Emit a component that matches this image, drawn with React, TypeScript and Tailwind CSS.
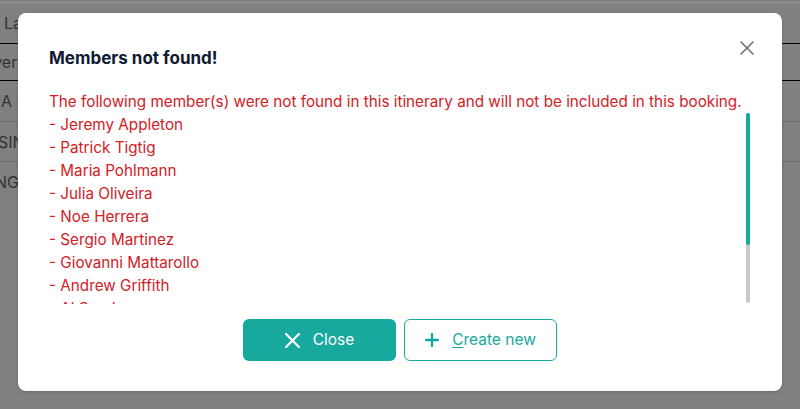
import React from 'react'

const missingMembers = [
  'Jeremy Appleton',
  'Patrick Tigtig',
  'Maria Pohlmann',
  'Julia Oliveira',
  'Noe Herrera',
  'Sergio Martinez',
  'Giovanni Mattarollo',
  'Andrew Griffith',
  'Al Sanders',
  'Kate Mueller',
]

// rows of the table that sits behind the overlay
const bgRows = [
  { text: 'Last name', h: 'h-[41px]', line: 'border-black', offset: 'ml-[4px]' },
  { text: 'Rivera', h: 'h-[37px]', line: 'border-black', offset: 'ml-[-21px]' },
  { text: 'ANA HILL', h: 'h-[41px]', line: 'border-[#6c6c6c]', offset: 'ml-[-22px]' },
  { text: 'SINGH', h: 'h-[40px]', line: 'border-[#6c6c6c]', offset: 'ml-[-2px]' },
  { text: 'NG', h: 'h-[40px]', line: 'border-transparent', offset: 'ml-[-5px]' },
]

function XIcon({ className, size = 14, stroke = 1.6 }: { className?: string; size?: number; stroke?: number }) {
  return (
    <svg width={size} height={size} viewBox="0 0 14 14" fill="none" className={className}>
      <path d="M1 1L13 13M13 1L1 13" stroke="currentColor" strokeWidth={stroke} strokeLinecap="round" />
    </svg>
  )
}

function PlusIcon({ className }: { className?: string }) {
  return (
    <svg width="14" height="14" viewBox="0 0 14 14" fill="none" className={className}>
      <path d="M7 1V13M1 7H13" stroke="currentColor" strokeWidth="2.4" strokeLinecap="round" />
    </svg>
  )
}

export default function App() {
  return (
    <div className="relative w-[800px] h-[409px] overflow-hidden bg-[#808080] font-['Inter','Liberation_Sans',sans-serif]">
      {/* Background table (dimmed) */}
      <div className="border-t border-[#9a9a9a] mt-[2px]">
        {bgRows.map((row) => (
          <div
            key={row.text}
            className={`${row.h} flex items-center border-b ${row.line} text-[16px] text-[#333] whitespace-nowrap overflow-hidden`}
          >
            <span className={row.offset}>{row.text}</span>
          </div>
        ))}
      </div>

      {/* Modal */}
      <div className="absolute left-[18px] top-[13px] w-[764px] h-[378px] bg-white rounded-[8px] shadow-[0_1px_3px_rgba(0,0,0,0.2)] px-[31px] pt-[33px] pb-[30px] flex flex-col">
        <button className="absolute right-[28px] top-[28px] text-[#6f6f6f]">
          <XIcon size={14} stroke={1.6} />
        </button>

        <h2 className="text-[17px] leading-[24px] font-bold text-[#101a33]">Members not found!</h2>

        <div className="mt-[20px] text-[15.25px] leading-[23px] text-[#d3201f]">
          <p className="whitespace-nowrap">
            The following member(s) were not found in this itinerary and will not be included in this booking.
          </p>
          <div className="flex h-[191px]">
            <ul className="flex-1 overflow-hidden">
              {missingMembers.map((name) => (
                <li key={name}>- {name}</li>
              ))}
            </ul>
            {/* scrollbar */}
            <div className="w-[4px] mr-[1px] h-[190px] rounded-full bg-[#c6c9cd] flex flex-col">
              <div className="h-[132px] rounded-full bg-[#17a89e]" />
            </div>
          </div>
        </div>

        <div className="mt-[15px] flex justify-center gap-[8px]">
          <button className="w-[153px] h-[42px] rounded-[6px] bg-[#17a89e] text-white text-[15.5px] flex items-center justify-center gap-[13px]">
            <XIcon size={15} stroke={2} />
            <span>Close</span>
          </button>
          <button className="w-[153px] h-[42px] rounded-[6px] border border-[#17a89e] bg-white text-[#17a89e] text-[15.5px] flex items-center justify-center gap-[13px]">
            <PlusIcon />
            <span>
              <span className="underline underline-offset-2">C</span>reate new
            </span>
          </button>
        </div>
      </div>
    </div>
  )
}
